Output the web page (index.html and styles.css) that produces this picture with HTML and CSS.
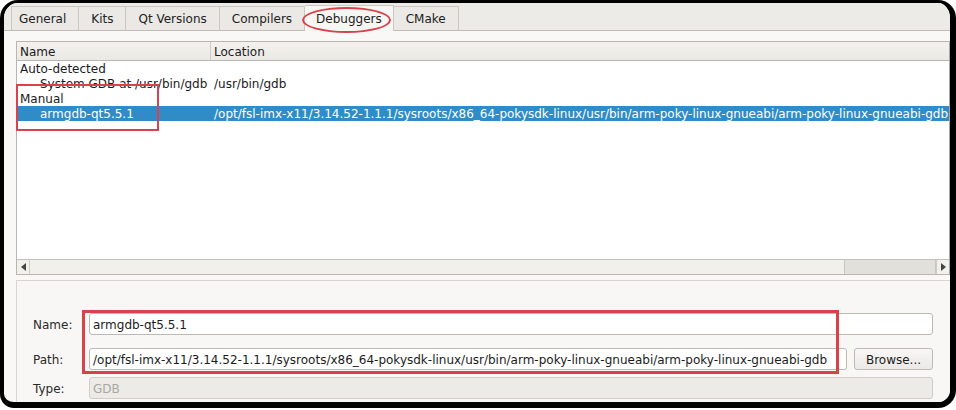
FILE: index.html
```html
<!DOCTYPE html>
<html>
<head>
<meta charset="utf-8">
<link rel="stylesheet" href="styles.css">
</head>
<body>
<div class="frame">
  <div class="tabbar">
    <div class="tab">General</div>
    <div class="tab">Kits</div>
    <div class="tab">Qt Versions</div>
    <div class="tab">Compilers</div>
    <div class="tab active">Debuggers</div>
    <div class="tab">CMake</div>
  </div>
  <div class="page">
    <div class="tree">
      <div class="header">
        <div class="hcol c1">Name</div>
        <div class="hcol c2">Location</div>
      </div>
      <div class="rows">
        <div class="row"><div class="c1">Auto-detected</div><div class="c2"></div></div>
        <div class="row"><div class="c1 ind">System GDB at /usr/bin/gdb</div><div class="c2">/usr/bin/gdb</div></div>
        <div class="row"><div class="c1">Manual</div><div class="c2"></div></div>
        <div class="row sel"><div class="c1 ind">armgdb-qt5.5.1</div><div class="c2">/opt/fsl-imx-x11/3.14.52-1.1.1/sysroots/x86_64-pokysdk-linux/usr/bin/arm-poky-linux-gnueabi/arm-poky-linux-gnueabi-gdb</div></div>
      </div>
      <div class="hscroll">
        <div class="sbtn"><span class="arr left"></span></div>
        <div class="track"><div class="thumb"></div></div>
        <div class="sbtn"><span class="arr right"></span></div>
      </div>
    </div>
    <div class="details">
      <div class="frow r-name">
        <div class="lbl">Name:</div>
        <div class="field">armgdb-qt5.5.1</div>
      </div>
      <div class="frow r-path">
        <div class="lbl">Path:</div>
        <div class="field">/opt/fsl-imx-x11/3.14.52-1.1.1/sysroots/x86_64-pokysdk-linux/usr/bin/arm-poky-linux-gnueabi/arm-poky-linux-gnueabi-gdb</div>
        <div class="btn">Browse...</div>
      </div>
      <div class="frow r-type">
        <div class="lbl">Type:</div>
        <div class="field disabled">GDB</div>
      </div>
    </div>
  </div>
  <div class="mark ellipse"></div>
  <div class="mark box1"></div>
  <div class="mark box2"></div>
</div>
</body>
</html>
```
FILE: styles.css
```css
* { box-sizing: border-box; }
html, body { margin: 0; padding: 0; background: #fff; }
body {
  font-family: "DejaVu Sans", sans-serif;
  font-size: 12px;
  color: #1b1b1b;
  width: 956px;
  height: 410px;
  overflow: hidden;
}
.frame {
  position: relative;
  width: 956px;
  height: 408px;
  border-style: solid;
  border-color: #000;
  border-width: 3px 6px 6px 4px;
  border-radius: 18px 18px 18px 14px;
  overflow: hidden;
  background: #f9f8f6;
}
.tabbar {
  display: flex;
  align-items: flex-end;
  height: 28px;
  padding-left: 7px;
  background: #edebe7;
  border-bottom: 1px solid #bfbbb5;
}
.tab {
  height: 24px;
  padding: 1px 12px 0;
  display: flex;
  align-items: center;
  background: #ebe9e5;
  border: 1px solid #cbc7c2;
  border-bottom: none;
  border-left: none;
  color: #222;
}
.tab:first-child { border-left: 1px solid #cbc7c2; padding-left: 7px; }
.tab.active {
  background: #f7f6f3;
  height: 26px;
  margin-bottom: -1px;
  padding: 0 11px;
}
.page {
  padding: 10px 0 0 12px;
}
.tree {
  height: 234px;
  border: 1px solid #b9b6b1;
  border-right: 1px solid #a9a6a1;
  background: #fff;
  display: flex;
  flex-direction: column;
  width: 934px;
}
.header {
  display: flex;
  height: 19px;
  background: linear-gradient(#f3f2ef, #ebe9e5);
  border-bottom: 1px solid #b9b6b1;
}
.hcol { display: flex; align-items: center; padding-left: 3px; padding-top: 1px; }
.header .c1 { width: 194px; border-right: 1px solid #cdc9c4; }
.rows { flex: 1; }
.row {
  display: flex;
  height: 15px;
  line-height: 16px;
  white-space: nowrap;
}
.row .c1 { width: 195px; padding-left: 3px; flex-shrink: 0; }
.row .c1.ind { padding-left: 23px; }
.row .c2 { padding-left: 2px; }
.row.sel { background: #308cc6; color: #fff; }
.hscroll {
  display: flex;
  height: 15px;
  border-top: 1px solid #c4c1bc;
  background: #f1f0ed;
}
.sbtn {
  width: 13px;
  display: flex;
  align-items: center;
  justify-content: center;
  border-right: 1px solid #cfccc7;
}
.sbtn:last-child { border-right: none; border-left: 1px solid #cfccc7; }
.arr { width: 0; height: 0; border-top: 4px solid transparent; border-bottom: 4px solid transparent; }
.arr.left { border-right: 5px solid #444; }
.arr.right { border-left: 5px solid #444; }
.track { flex: 1; display: flex; justify-content: flex-end; }
.thumb {
  width: 92px;
  background: #e2e0dc;
  border-left: 1px solid #c9c6c1;
  border-right: 1px solid #c9c6c1;
}
.details {
  margin-top: 5px;
  width: 940px;
  height: 140px;
  border: 1px solid #d9d6d1;
  border-right: none;
  background: #f8f7f5;
  padding: 32px 16px 0 16px;
}
.frow { display: flex; align-items: center; }
.lbl { width: 56px; flex-shrink: 0; color: #2a2a2a; padding-top: 1px; }
.field {
  height: 22px;
  border: 1px solid #bdbab5;
  border-radius: 3px;
  background: #fff;
  padding: 1px 0 0 3px;
  display: flex;
  align-items: center;
  white-space: nowrap;
  overflow: hidden;
}
.field.disabled { background: #ecebe8; color: #aaa7a2; border-color: #cfccc7; }
.r-name .field { width: 844px; }
.r-path { margin-top: 13px; }
.r-path .field { width: 758px; }
.btn {
  margin-left: 7px;
  width: 79px;
  height: 22px;
  border: 1px solid #bdbab5;
  border-radius: 3px;
  background: linear-gradient(#f8f7f5, #ebe9e5);
  display: flex;
  align-items: center;
  justify-content: center;
  padding-top: 1px;
}
.r-type { margin-top: 7px; }
.r-type .field { width: 844px; }
.mark { position: absolute; border: 2px solid #d8424a; }
.ellipse {
  left: 298px; top: 4px; width: 89px; height: 26px;
  border-radius: 50%;
}
.box1 { left: 12px; top: 81px; width: 143px; height: 47px; }
.box2 { left: 78px; top: 307px; width: 757px; height: 64px; border-width: 3px; }
```
